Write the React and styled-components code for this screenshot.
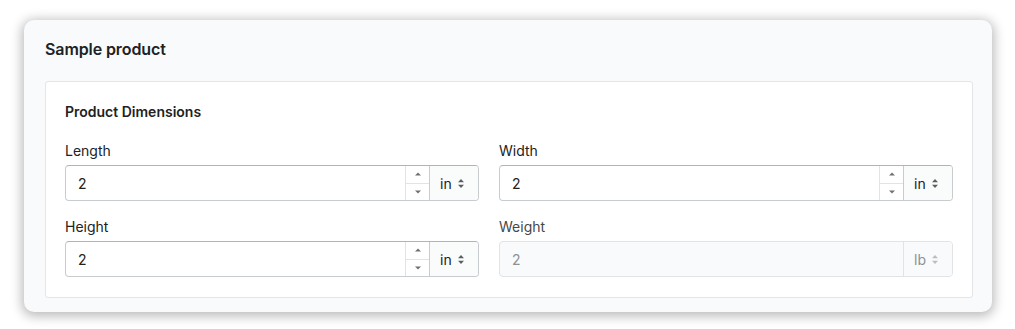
import React from 'react';
import styled, { createGlobalStyle } from 'styled-components';

const GlobalStyle = createGlobalStyle`
  body {
    margin: 0;
    background: #ffffff;
    font-family: "Inter", "Liberation Sans", sans-serif;
    color: #202223;
  }
`;

const Page = styled.div`
  padding: 20px 23px 18px 24px;
`;

const Card = styled.div`
  background: #f9fafb;
  border-radius: 10px;
  box-shadow: 0 2px 12px 2px rgba(0, 0, 0, 0.28);
  padding: 18px 19px 14px 21px;
`;

const Title = styled.h2`
  margin: 0 0 21px;
  font-size: 16px;
  line-height: 22px;
  font-weight: 600;
  letter-spacing: -0.1px;
  color: #202223;
`;

const Section = styled.div`
  background: #ffffff;
  border: 1px solid #e4e5e7;
  border-radius: 3px;
  padding: 20px 19px 20px 19px;
`;

const SectionTitle = styled.h3`
  margin: 0 0 19px;
  font-size: 14px;
  line-height: 20px;
  font-weight: 600;
`;

const Grid = styled.div`
  display: grid;
  grid-template-columns: 414px 1fr;
  column-gap: 20px;
  row-gap: 16px;
`;

const Field = styled.div`
  display: flex;
  flex-direction: column;
`;

const Label = styled.label`
  font-size: 14px;
  line-height: 20px;
  margin-bottom: 4px;
  color: ${p => (p.disabled ? '#45484b' : '#202223')};
`;

const Control = styled.div`
  display: flex;
  height: 36px;
  box-sizing: border-box;
  border: 1px solid ${p => (p.disabled ? '#e1e3e5' : '#c9cccf')};
  border-top-color: ${p => (p.disabled ? '#e1e3e5' : '#aeb4b9')};
  border-radius: 4px;
  background: ${p => (p.disabled ? '#f9fafb' : '#ffffff')};
  overflow: hidden;
`;

const Value = styled.div`
  flex: 1;
  display: flex;
  align-items: center;
  padding-left: 12px;
  font-size: 14px;
  color: ${p => (p.disabled ? '#8c9196' : '#202223')};
`;

const Spinner = styled.div`
  width: 23px;
  display: flex;
  flex-direction: column;
  border-left: 1px solid #e1e3e5;
`;

const SpinHalf = styled.div`
  flex: 1;
  display: flex;
  align-items: center;
  justify-content: center;
  & + & {
    border-top: 1px solid #e1e3e5;
  }
`;

const Unit = styled.div`
  width: 49px;
  display: flex;
  align-items: center;
  gap: 5px;
  padding-left: 10px;
  box-sizing: border-box;
  border-left: 1px solid ${p => (p.disabled ? '#e1e3e5' : '#c9cccf')};
  background: ${p => (p.disabled ? '#f9fafb' : '#fafbfb')};
  font-size: 14px;
  color: ${p => (p.disabled ? '#8c9196' : '#202223')};
`;

const Arrow = ({ down }) => (
  <svg width="6" height="4" viewBox="0 0 6 4">
    <path d={down ? 'M0 0.5h6L3 3.5z' : 'M0 3.5h6L3 0.5z'} fill="#6d7175" />
  </svg>
);

const SelectIcon = ({ disabled }) => (
  <svg width="8" height="11" viewBox="0 0 8 11">
    <path d="M4 1L7 4.2H1z M4 10L1 6.8h6z" fill={disabled ? '#b9bec3' : '#5c5f62'} />
  </svg>
);

const Input = ({ label, value, unit, disabled }) => (
  <Field>
    <Label disabled={disabled}>{label}</Label>
    <Control disabled={disabled}>
      <Value disabled={disabled}>{value}</Value>
      {!disabled && (
        <Spinner>
          <SpinHalf><Arrow /></SpinHalf>
          <SpinHalf><Arrow down /></SpinHalf>
        </Spinner>
      )}
      <Unit disabled={disabled}>
        {unit}
        <SelectIcon disabled={disabled} />
      </Unit>
    </Control>
  </Field>
);

export default function App() {
  return (
    <>
      <GlobalStyle />
      <Page>
        <Card>
          <Title>Sample product</Title>
          <Section>
            <SectionTitle>Product Dimensions</SectionTitle>
            <Grid>
              <Input label="Length" value="2" unit="in" />
              <Input label="Width" value="2" unit="in" />
              <Input label="Height" value="2" unit="in" />
              <Input label="Weight" value="2" unit="lb" disabled />
            </Grid>
          </Section>
        </Card>
      </Page>
    </>
  );
}
